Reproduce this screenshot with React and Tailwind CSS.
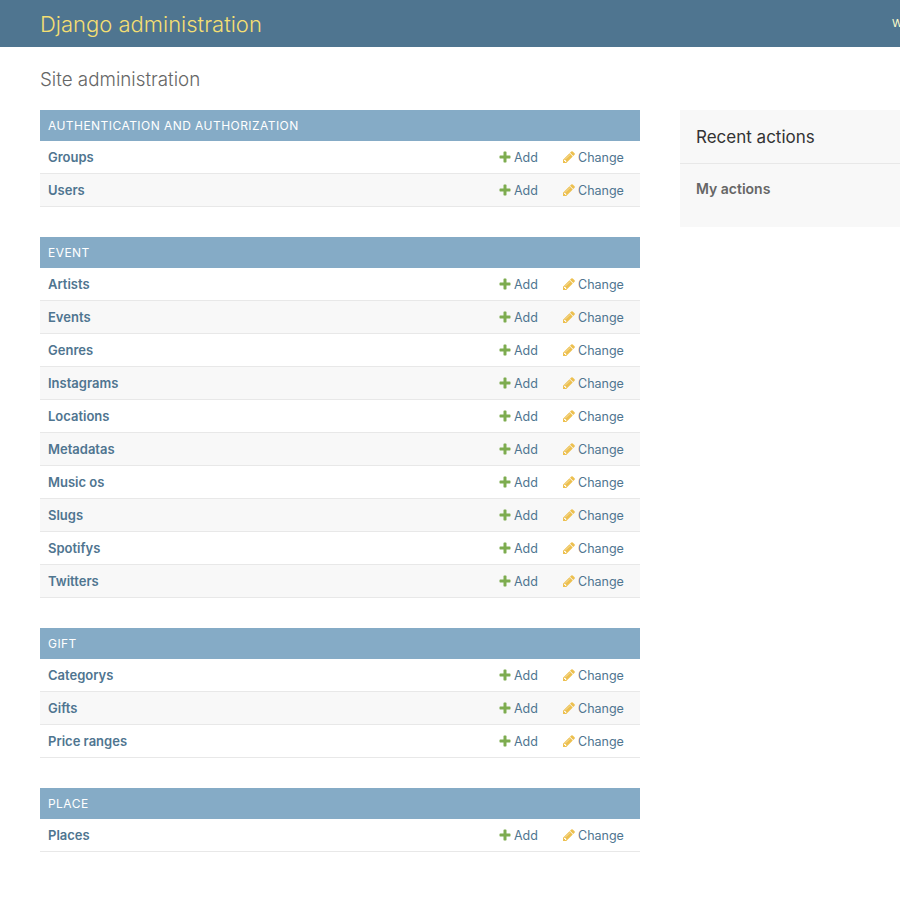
const modules = [
    { name: 'Authentication and Authorization', models: ['Groups', 'Users'] },
    { name: 'Event', models: ['Artists', 'Events', 'Genres', 'Instagrams', 'Locations', 'Metadatas', 'Music os', 'Slugs', 'Spotifys', 'Twitters'] },
    { name: 'Gift', models: ['Categorys', 'Gifts', 'Price ranges'] },
    { name: 'Place', models: ['Places'] },
];

function PlusIcon() {
    return (
        <svg viewBox="0 0 1792 1792" className="h-[14px] w-[14px] shrink-0 fill-[#7dac4f]">
            <path d="M1600 796v192q0 40-28 68t-68 28h-416v416q0 40-28 68t-68 28h-192q-40 0-68-28t-28-68v-416h-416q-40 0-68-28t-28-68v-192q0-40 28-68t68-28h416v-416q0-40 28-68t68-28h192q40 0 68 28t28 68v416h416q40 0 68 28t28 68z" />
        </svg>
    );
}

function PencilIcon() {
    return (
        <svg viewBox="0 0 1792 1792" className="h-[14px] w-[14px] shrink-0 fill-[#edc04f]">
            <path d="M491 1536l91-91-235-235-91 91v107h128v128h107zm523-928q0-22-22-22-10 0-17 7l-542 542q-7 7-7 17 0 22 22 22 10 0 17-7l542-542q7-7 7-17zm-54-192l416 416-832 832h-416v-416zm683 96q0 53-37 90l-166 166-416-416 166-165q36-38 90-38 53 0 91 38l235 234q37 39 37 90z" />
        </svg>
    );
}

function Row({ label, striped }) {
    return (
        <div className={`flex h-[33px] items-center border-b border-[#e8e8e8] pl-2 pr-4 text-[#4f7590] ${striped ? 'bg-[#f8f8f8]' : 'bg-white'}`}>
            <span className="flex-1 pt-px text-[13px] font-semibold">{label}</span>
            <span className="flex w-[64px] items-center gap-[2px] text-[12.5px]">
                <PlusIcon />
                <span className="pt-[2px]">Add</span>
            </span>
            <span className="flex w-[62px] items-center gap-[2px] text-[12.5px]">
                <PencilIcon />
                <span className="pt-[2px]">Change</span>
            </span>
        </div>
    );
}

export default function App() {
    return (
        <div className="h-[900px] w-[900px] overflow-hidden bg-white font-[Inter,sans-serif] text-[#333]">
            <header className="flex h-[47px] items-center overflow-hidden bg-[#4f7590] pl-10">
                <div className="w-[852px] shrink-0 pt-[2px] text-[22px] font-light text-[#f4df72]">Django administration</div>
                <div className="shrink-0 whitespace-nowrap text-[11px] uppercase text-[#ffffcc]">Welcome, admin</div>
            </header>

            <main className="px-10 pt-5">
                <h1 className="mb-[18px] pt-px text-[18.8px] font-light leading-6 text-[#666]">Site administration</h1>
                <div className="flex gap-10">
                    <div className="flex w-[600px] shrink-0 flex-col gap-[30px]">
                        {modules.map((mod) => (
                            <section key={mod.name}>
                                <div className="flex h-[31px] items-center bg-[#85abc6] px-2 text-[12px] uppercase tracking-[0.45px] text-white">{mod.name}</div>
                                {mod.models.map((model, i) => (
                                    <Row key={model} label={model} striped={i % 2 === 1} />
                                ))}
                            </section>
                        ))}
                    </div>
                    <aside className="h-[117px] w-[300px] shrink-0 bg-[#f8f8f8]">
                        <h2 className="flex h-[54px] items-center border-b border-[#e8e8e8] px-4 pt-[3px] text-[17px] text-[#333]">Recent actions</h2>
                        <h3 className="px-4 pt-4 text-[14px] font-semibold leading-[18px] text-[#666]">My actions</h3>
                    </aside>
                </div>
            </main>
        </div>
    );
}
